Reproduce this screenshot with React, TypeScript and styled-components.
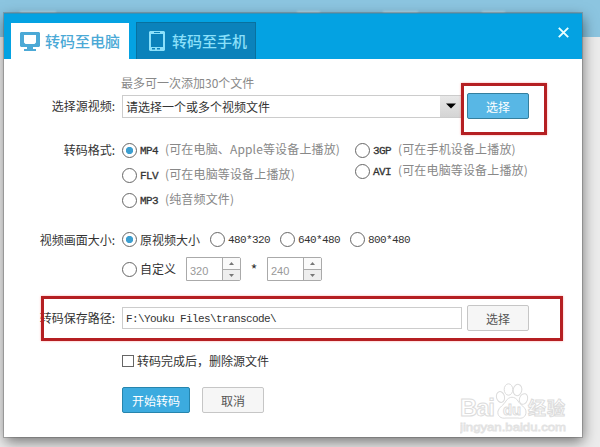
import styled, { createGlobalStyle } from "styled-components";

const App = () => (
    <>
        <GlobalStyle />
        <Page>
            <PageBar>
                <Smudge $left={20} $width={36} />
                <Smudge $left={241} $width={23} />
                <Smudge $left={63} $width={35} />
                <Smudge $left={64} $width={23} />
            </PageBar>
            <Dialog>
                <DialogHeader>
                    <ActiveTab>
                        <MonitorIcon />
                        转码至电脑
                    </ActiveTab>
                    <Tab>
                        <PhoneIcon />
                        转码至手机
                    </Tab>
                    <CloseButton aria-label="close">
                        <svg width="11" height="11" viewBox="0 0 11 11">
                            <path d="M0.8 0.8L10.2 10.2M10.2 0.8L0.8 10.2" stroke="#e9ffff" strokeWidth="1.9" />
                        </svg>
                    </CloseButton>
                </DialogHeader>
                <DialogBody>
                    <Hint>最多可一次添加30个文件</Hint>
                    <Row $top={3} $height={26}>
                        <Label>选择源视频:</Label>
                        <Select>
                            <SelectText>请选择一个或多个视频文件</SelectText>
                            <SelectArrow>
                                <svg width="10" height="6" viewBox="0 0 10 6">
                                    <path d="M0 0.5H10L5 5.5Z" fill="#000" />
                                </svg>
                            </SelectArrow>
                        </Select>
                        <Button $kind="light">选择</Button>
                    </Row>
                    <FormatRow>
                        <Label>转码格式:</Label>
                        <FormatColumn $width={233} $rowHeight={25}>
                            <Format name="MP4" note="(可在电脑、Apple等设备上播放)" checked />
                            <Format name="FLV" note="(可在电脑等设备上播放)" />
                            <Format name="MP3" note="(纯音频文件)" />
                        </FormatColumn>
                        <FormatColumn $width={185} $rowHeight={21} $top={2}>
                            <Format name="3GP" note="(可在手机设备上播放)" />
                            <Format name="AVI" note="(可在电脑等设备上播放)" />
                        </FormatColumn>
                    </FormatRow>
                    <Row $top={16} $height={21}>
                        <Label>视频画面大小:</Label>
                        <SizeOption $width={88}><Radio $checked />原视频大小</SizeOption>
                        <SizeOption $width={70}><Radio /><Digits>480*320</Digits></SizeOption>
                        <SizeOption $width={70}><Radio /><Digits>640*480</Digits></SizeOption>
                        <SizeOption $width={70}><Radio /><Digits>800*480</Digits></SizeOption>
                    </Row>
                    <Row $top={7} $height={24}>
                        <Label />
                        <SizeOption $width={64}><Radio />自定义</SizeOption>
                        <Spinner value="320" />
                        <Times>*</Times>
                        <Spinner value="240" />
                    </Row>
                    <Row $top={24} $height={26}>
                        <Label>转码保存路径:</Label>
                        <PathInput>F:\Youku Files\transcode\</PathInput>
                        <Button $kind="plain">选择</Button>
                    </Row>
                    <Row $top={23} $height={14}>
                        <Label />
                        <Checkbox />
                        转码完成后，删除源文件
                    </Row>
                    <Row $top={19} $height={26}>
                        <Label />
                        <Button $kind="primary" $width={68}>开始转码</Button>
                        <CancelButton $kind="plain">取消</CancelButton>
                    </Row>
                </DialogBody>
                <Marker $x={457} $y={70} $width={86} $height={52} />
                <Marker $x={37} $y={283} $width={522} $height={45} />
                <Watermark />
            </Dialog>
        </Page>
    </>
);

export default App;

const Format = ({ name, note, checked }: { name: string; note: string; checked?: boolean }) => (
    <FormatItem>
        <Radio $checked={checked} />
        <FormatName>{name}</FormatName>
        <FormatNote>{note}</FormatNote>
    </FormatItem>
);

const Spinner = ({ value }: { value: string }) => (
    <SpinnerBox>
        <SpinnerValue>{value}</SpinnerValue>
        <SpinnerButtons>
            <SpinnerButton>
                <svg width="5" height="3" viewBox="0 0 5 3"><path d="M0 3H5L2.5 0Z" fill="#777" /></svg>
            </SpinnerButton>
            <SpinnerButton $down>
                <svg width="5" height="3" viewBox="0 0 5 3"><path d="M0 0H5L2.5 3Z" fill="#777" /></svg>
            </SpinnerButton>
        </SpinnerButtons>
    </SpinnerBox>
);

const MonitorIcon = () => (
    <svg width="20" height="19" viewBox="0 0 20 19">
        <path fillRule="evenodd" fill="#4ba9d6" d="M1 0H19L20 1V14L19 15H13V17H16V19H4V17H7V15H1L0 14V1ZM4 3V10.500L5.500 12H14.500L16 10.500V3Z" />
    </svg>
);

const PhoneIcon = () => (
    <svg width="16" height="20" viewBox="0 0 16 20">
        <path fillRule="evenodd" fill="#8be0fa" d="M1 0H15L16 1V19L15 20H1L0 19V1ZM2 3V16H14V3ZM5 1V2H11V1ZM3 17V18.500H6V17ZM8 17V18.500H11V17Z" />
    </svg>
);

const Watermark = () => (
    <WatermarkArt width="110" height="54" viewBox="0 0 110 54">
        <g fill="#fff" stroke="#dcdcdc" strokeWidth="1">
            <text x="0" y="33" fontFamily="Liberation Sans, sans-serif" fontWeight="700" fontSize="24" textLength="35">Bai</text>
            <ellipse cx="40.500" cy="14" rx="4" ry="5.500" transform="rotate(-15 40.500 14)" />
            <ellipse cx="48.500" cy="6.500" rx="4.300" ry="5.700" />
            <ellipse cx="57.500" cy="7" rx="4.300" ry="5.700" transform="rotate(12 57.500 7)" />
            <ellipse cx="63.500" cy="16" rx="4" ry="5.500" transform="rotate(20 63.500 16)" />
            <path d="M46 18C49 13 55 13 58 18C60 22 66 24 66 29C66 34 62 36 58 35H46C41 36 37 33 38 28C39 24 44 22 46 18Z" />
            <text x="43" y="32" fontFamily="Liberation Sans, sans-serif" fontWeight="700" fontSize="15" textLength="18" lengthAdjust="spacingAndGlyphs">du</text>
            <text x="68" y="32" fontFamily="Noto Sans CJK SC, sans-serif" fontWeight="700" fontSize="18" textLength="37">经验</text>
        </g>
        <text x="0" y="48" fill="#fff" stroke="#e2e2e2" strokeWidth="0.8" fontFamily="Liberation Sans, sans-serif" fontSize="11" textLength="106" lengthAdjust="spacingAndGlyphs">
            jingyan.baidu.com
        </text>
    </WatermarkArt>
);

const GlobalStyle = createGlobalStyle`
    body {
        margin: 0;
        overflow: hidden;
    }
    * {
        box-sizing: border-box;
    }
`;

const Page = styled.div`
    width: 600px;
    height: 447px;
    overflow: hidden;
    background: #ececec;
    color: #333;
    font-family: "Noto Sans CJK SC", sans-serif;
    font-size: 12px;
    line-height: 14px;
`;

const PageBar = styled.div`
    display: flex;
    height: 37px;
    padding-top: 11px;
    background: #8cc5e0;
`;

const Smudge = styled.span<{ $left: number; $width: number }>`
    width: ${p => p.$width}px;
    height: 3px;
    margin-left: ${p => p.$left}px;
    background: #b3d9ea;
    filter: blur(1px);
`;

const Dialog = styled.div`
    position: relative;
    width: 578px;
    height: 424px;
    margin: -24px 0 0 4px;
    background: #fff;
    box-shadow: 0 0 0 1px rgba(90, 90, 90, 0.35), 1px 5px 13px 0 rgba(0, 0, 0, 0.5);
`;

const DialogHeader = styled.div`
    display: flex;
    align-items: flex-end;
    height: 46px;
    padding-left: 7px;
    background: #04a2e2;
    border-top: 1px solid #2c93bd;
`;

const Tab = styled.div`
    display: flex;
    align-items: center;
    width: 120px;
    height: 37px;
    padding-left: 12px;
    gap: 7px;
    border: 1px solid #08719f;
    border-bottom: 0;
    background: #0b82bb;
    color: #8be0fa;
    font-size: 15px;
    font-weight: 500;
    line-height: 18px;
    white-space: nowrap;
`;

const ActiveTab = styled(Tab)`
    width: 118px;
    height: 36px;
    margin-right: 7px;
    padding-left: 9px;
    gap: 5px;
    border: 0;
    background: #fff;
    color: #4ba9d6;
`;

const CloseButton = styled.button`
    display: flex;
    align-self: flex-start;
    margin: 13px 13px 0 auto;
    padding: 0;
    border: 0;
    background: none;
`;

const DialogBody = styled.div`
    padding-top: 17px;
`;

const Hint = styled.div`
    height: 14px;
    padding-left: 117px;
    color: #888;
`;

const Row = styled.div<{ $top: number; $height: number }>`
    display: flex;
    align-items: center;
    height: ${p => p.$height}px;
    margin-top: ${p => p.$top}px;
    white-space: nowrap;
`;

const Label = styled.div`
    flex: none;
    width: 118px;
    padding-right: 7px;
    text-align: right;
`;

const Select = styled.div`
    display: flex;
    align-items: center;
    width: 340px;
    height: 23px;
    margin-right: 5px;
    padding-left: 3px;
    border: 1px solid #ccc;
`;

const SelectText = styled.span`
    flex: 1;
    padding-top: 1px;
`;

const SelectArrow = styled.span`
    display: flex;
    align-items: center;
    justify-content: center;
    width: 21px;
    height: 21px;
    background: linear-gradient(#e8e8e8, #d4d4d4);
`;

const buttonKinds = {
    light: "background: #58b7e5; border-color: #347f9e; color: #fff;",
    primary: "background: #3cabdf; border-color: #2685ad; color: #fff;",
    plain: "background: #f6f6f6; border-color: #c6c6c6; color: #555;",
};

const Button = styled.button<{ $kind: keyof typeof buttonKinds; $width?: number }>`
    width: ${p => p.$width ?? 62}px;
    height: 26px;
    padding: 2px 0 0;
    border: 1px solid;
    border-radius: 2px;
    font: inherit;
    ${p => buttonKinds[p.$kind]}
`;

const CancelButton = styled(Button)`
    margin-left: 12px;
`;

const FormatRow = styled.div`
    display: flex;
    height: 75px;
    margin-top: 19px;
    white-space: nowrap;

    ${Label} {
        padding-top: 5px;
    }
`;

const FormatItem = styled.div`
    display: flex;
    align-items: center;
`;

const FormatColumn = styled.div<{ $width: number; $rowHeight: number; $top?: number }>`
    width: ${p => p.$width}px;
    padding-top: ${p => p.$top ?? 0}px;

    ${FormatItem} {
        height: ${p => p.$rowHeight}px;
    }
`;

const FormatName = styled.span`
    width: 25px;
    font-family: "Liberation Mono", monospace;
    font-size: 11px;
    letter-spacing: -0.6px;
    -webkit-text-stroke: 0.3px;
`;

const FormatNote = styled.span`
    padding-bottom: 3px;
    color: #888;
    letter-spacing: 0.15px;
`;

const Radio = styled.span<{ $checked?: boolean }>`
    flex: none;
    width: 15px;
    height: 15px;
    margin-right: 3px;
    border: 1px solid #666;
    border-radius: 50%;
    background: ${p => (p.$checked ? "radial-gradient(circle, #3d9fd0 3.3px, #fff 4px)" : "#fff")};
`;

const SizeOption = styled.div<{ $width: number }>`
    display: flex;
    align-items: center;
    width: ${p => p.$width}px;
`;

const Digits = styled.span`
    font-family: "Liberation Mono", monospace;
    font-size: 11px;
    letter-spacing: -0.6px;
`;

const SpinnerBox = styled.div`
    display: flex;
    width: 55px;
    height: 24px;
    border: 1px solid #aaa;
    border-radius: 0 2px 2px 0;
`;

const SpinnerValue = styled.span`
    flex: 1;
    padding: 6px 0 0 3px;
    color: #999;
    font-family: "Liberation Sans", sans-serif;
    font-size: 11px;
`;

const SpinnerButtons = styled.div`
    width: 18px;
    border-left: 1px solid #aaa;
`;

const SpinnerButton = styled.div<{ $down?: boolean }>`
    display: flex;
    align-items: center;
    justify-content: center;
    height: 11px;
    border-top: ${p => (p.$down ? "1px solid #aaa" : "0")};
    background: ${p => (p.$down ? "#eee" : "#fafafa")};
`;

const Times = styled.span`
    width: 26px;
    text-align: center;
    font-size: 14px;
`;

const PathInput = styled.div`
    width: 340px;
    height: 22px;
    margin-right: 5px;
    padding: 4px 0 0 3px;
    border: 1px solid #ccc;
    font-family: "Liberation Mono", monospace;
    font-size: 11px;
    letter-spacing: -0.6px;
`;

const Checkbox = styled.span`
    width: 12px;
    height: 12px;
    margin-right: 3px;
    border: 1px solid #666;
`;

const Marker = styled.div<{ $x: number; $y: number; $width: number; $height: number }>`
    position: absolute;
    left: ${p => p.$x}px;
    top: ${p => p.$y}px;
    width: ${p => p.$width}px;
    height: ${p => p.$height}px;
    border: 3px solid #b51f22;
    box-shadow: 0 0 2px rgba(255, 80, 80, 0.5);
`;

const WatermarkArt = styled.svg`
    position: absolute;
    left: 456px;
    top: 370px;
`;
